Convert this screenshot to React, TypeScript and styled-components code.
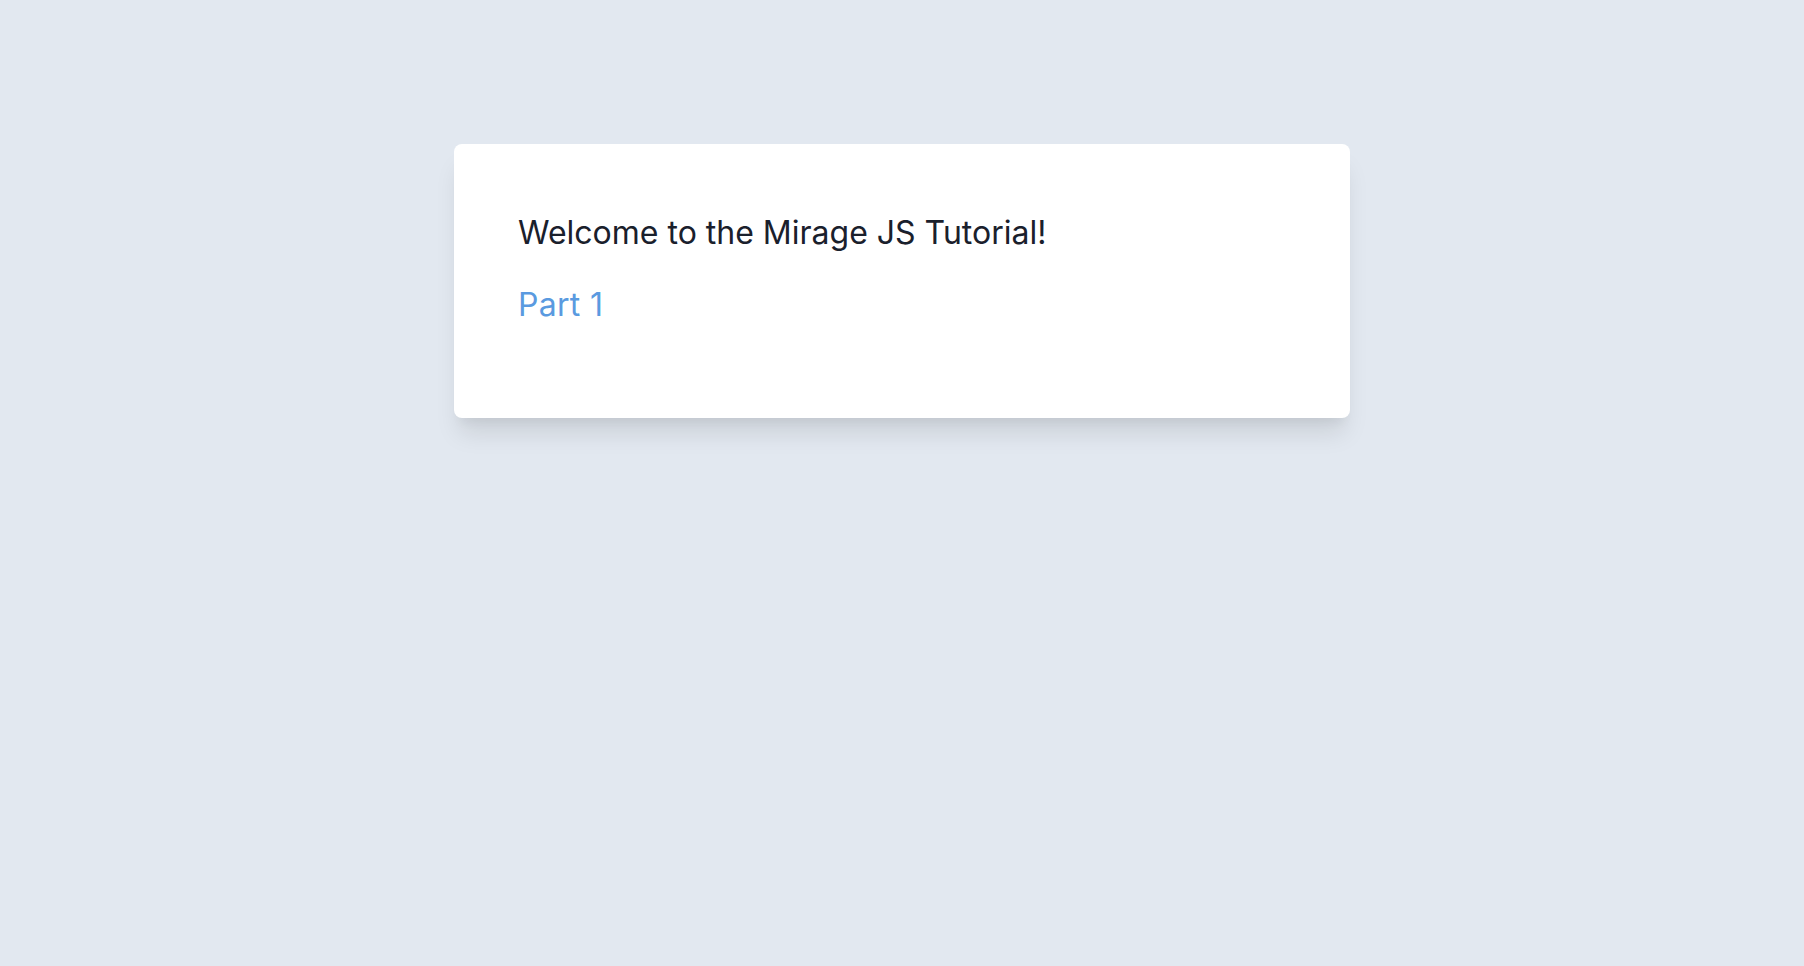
import React from "react";
import styled, { createGlobalStyle } from "styled-components";

const GlobalStyle = createGlobalStyle`
  html, body {
    margin: 0;
    padding: 0;
    background: #e2e8f0;
    font-family: Inter, "Noto Sans", sans-serif;
  }
  * { box-sizing: border-box; }
`;

const Page = styled.div`
  min-height: 966px;
  background: #e2e8f0;
  padding-top: 144px;
  display: flex;
  justify-content: center;
  align-items: flex-start;
`;

const Card = styled.div`
  width: 896px;
  min-height: 274px;
  background: #ffffff;
  border-radius: 8px;
  box-shadow: 0 20px 25px -5px rgba(0, 0, 0, 0.1), 0 10px 10px -5px rgba(0, 0, 0, 0.04);
  padding: 69px 64px 64px;
  display: flex;
  flex-direction: column;
`;

const Title = styled.h1`
  margin: 0;
  font-size: 32px;
  line-height: 40px;
  font-weight: 400;
  color: #1a202c;
`;

const PartLink = styled.a`
  margin-top: 32px;
  font-size: 32px;
  line-height: 40px;
  letter-spacing: 0.3px;
  color: #5a9ae0;
  text-decoration: none;
  align-self: flex-start;
`;

export default function App() {
  return (
    <>
      <GlobalStyle />
      <Page>
        <Card>
          <Title>Welcome to the Mirage JS Tutorial!</Title>
          <PartLink href="#">Part 1</PartLink>
        </Card>
      </Page>
    </>
  );
}
